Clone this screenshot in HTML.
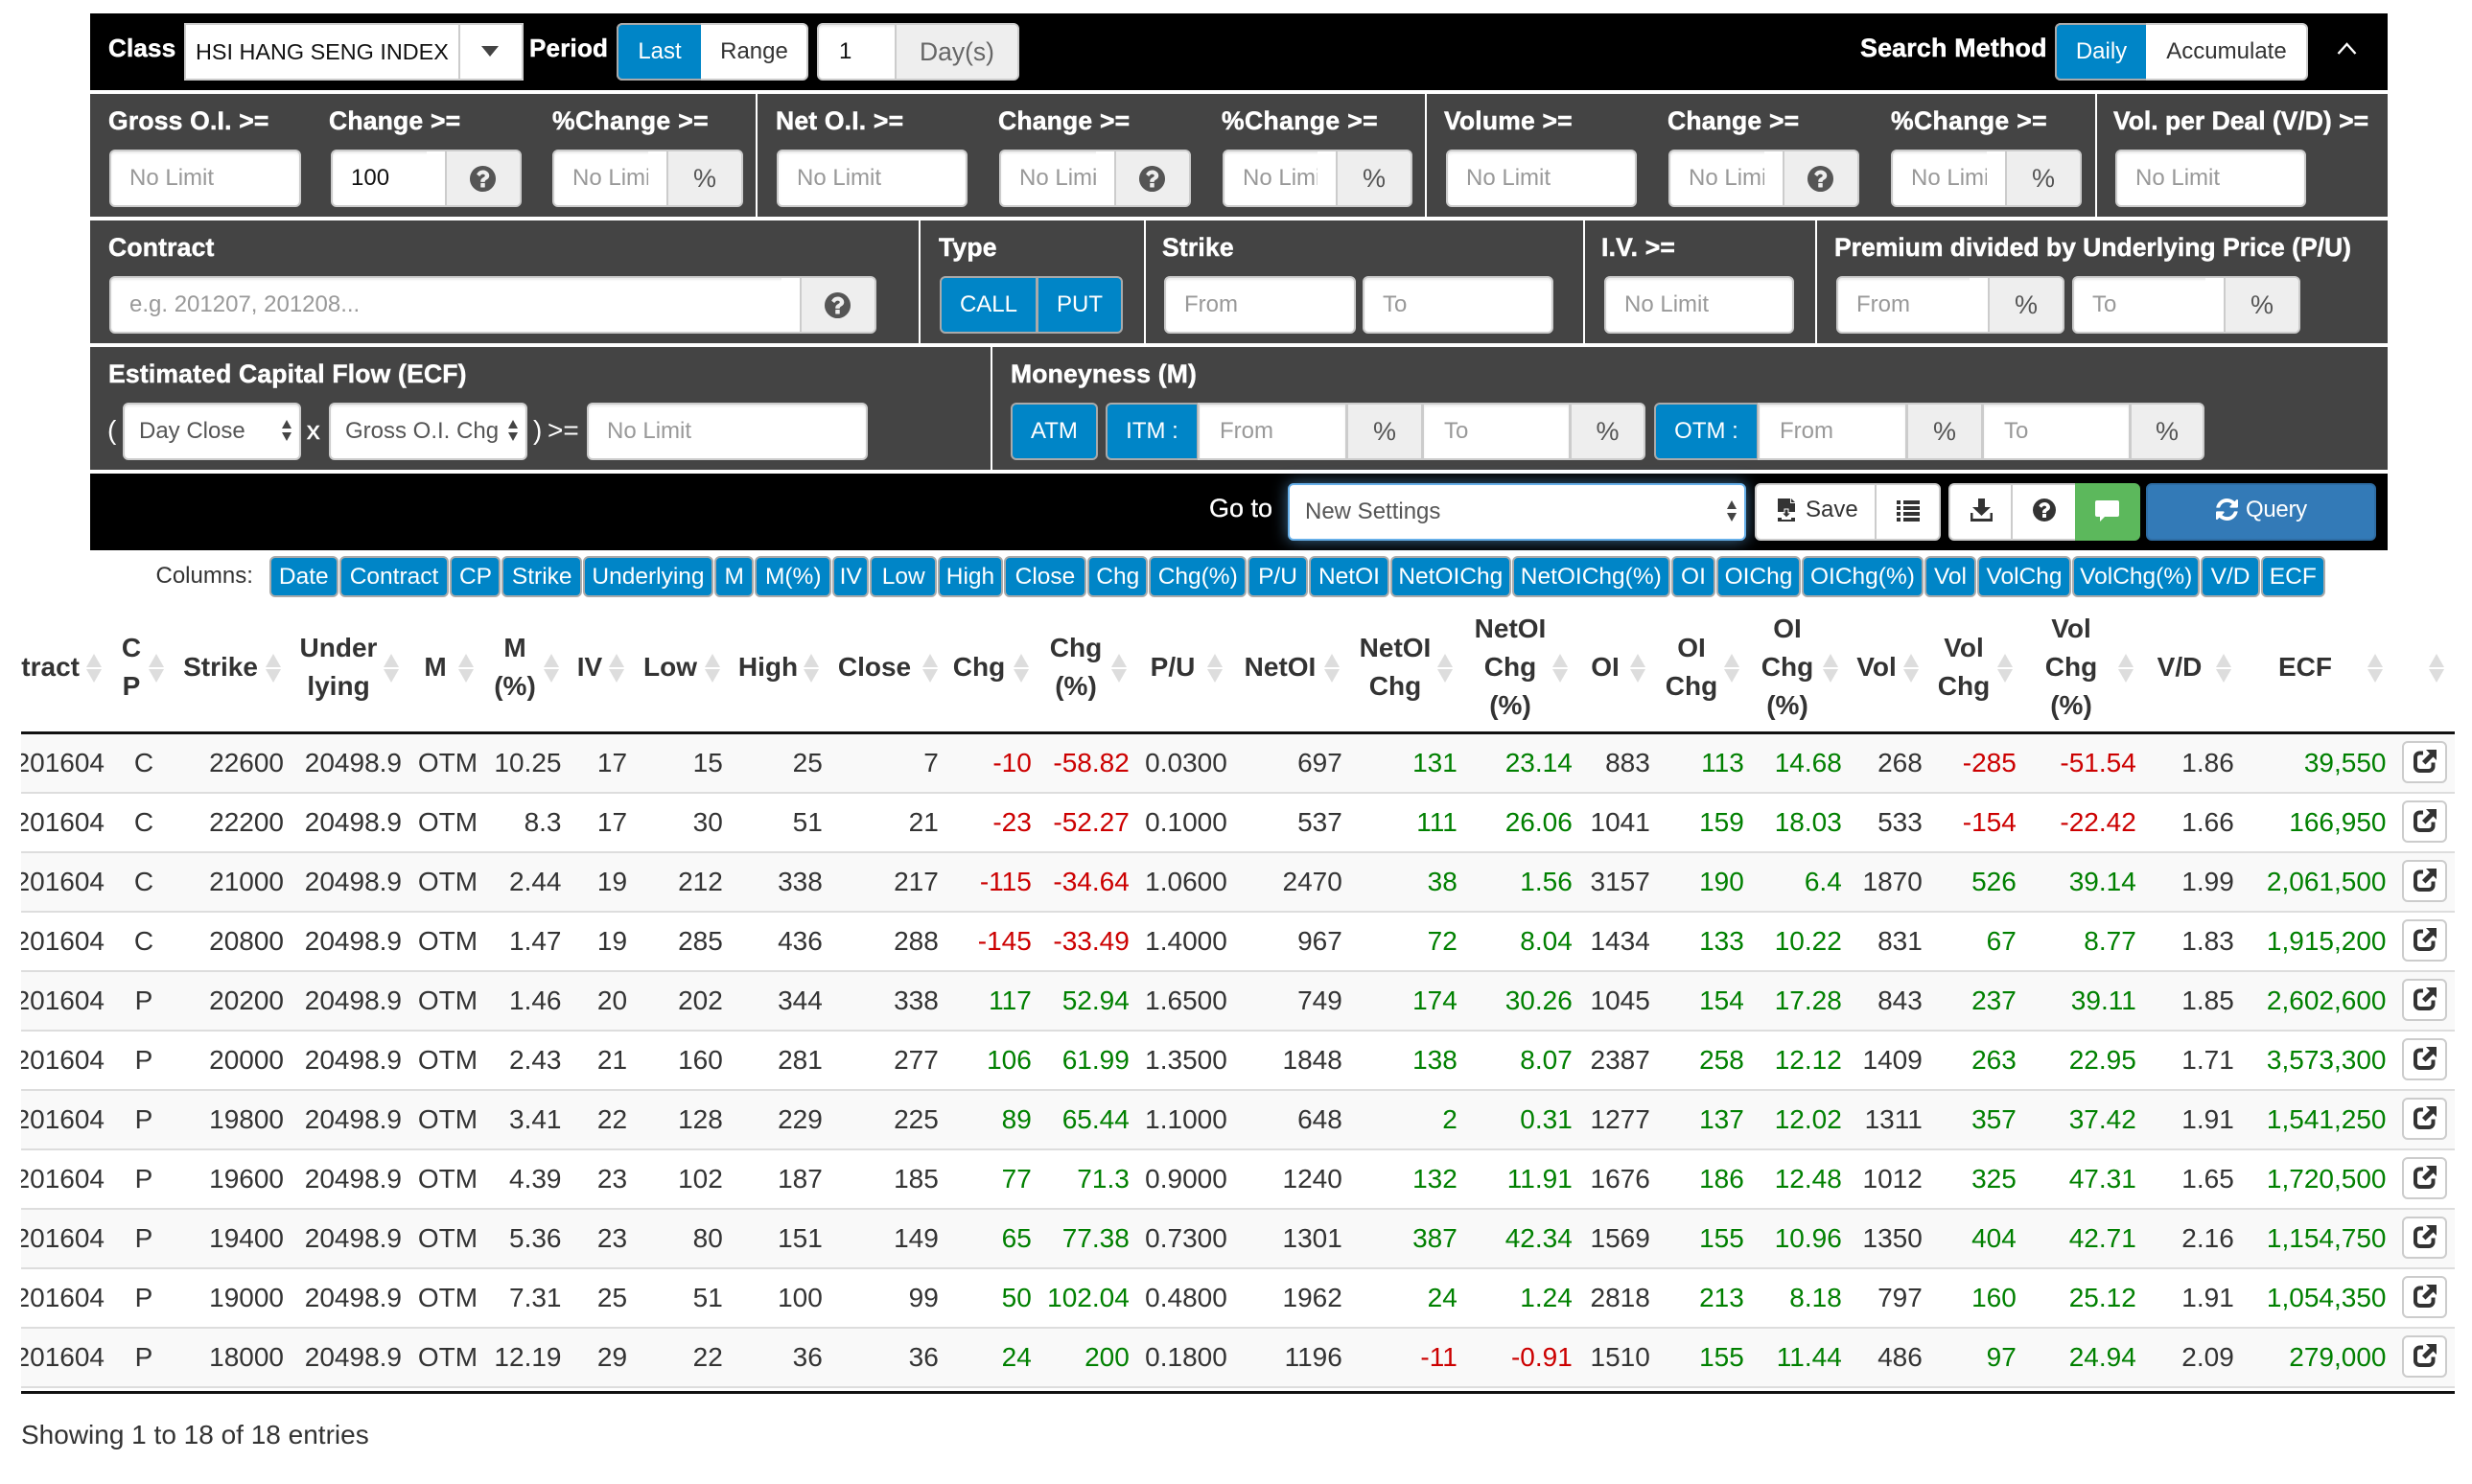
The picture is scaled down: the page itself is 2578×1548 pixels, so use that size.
<!DOCTYPE html>
<html lang="en"><head><meta charset="utf-8"><title>Options Search</title>
<style>
html,body{margin:0;padding:0;background:#fff}
body{position:relative;width:2578px;height:1548px;overflow:hidden;font-family:"Liberation Sans",Arial,sans-serif;color:#333}
.r{position:absolute;left:94px;width:2396px}
.k{background:#000}.g{background:#444}
.d{position:absolute;width:2px;background:#fff}
.l{position:absolute;font-size:26.5px;font-weight:bold;line-height:40px;color:#fff;white-space:nowrap;-webkit-text-stroke:.5px #fff;letter-spacing:.2px}
.w{position:absolute;font-size:28px;line-height:40px;color:#fff;white-space:nowrap}
.i{position:absolute;box-sizing:border-box;height:60px;background:#fff;border:2px solid #ccc;border-radius:6px;font-size:24px;line-height:56px;padding-left:19px;color:#999;overflow:hidden;white-space:nowrap;box-shadow:inset 0 2px 2px rgba(0,0,0,.075)}
.v{color:#111}
.s5{color:#555}
.a{position:absolute;right:0;top:0;bottom:0;width:76px;background:#eee;border-left:2px solid #ccc;color:#555;font-size:27px;display:flex;align-items:center;justify-content:center;box-shadow:-19px 0 0 #fff;padding:0}
.a svg{position:relative;left:-1px}
.bb{position:absolute;box-sizing:border-box;height:60px;background:#0085c7;border:2px solid #aaa;color:#fff;font-size:24px;line-height:56px;text-align:center;white-space:nowrap}
.wb{position:absolute;box-sizing:border-box;height:60px;background:#fff;border:2px solid #ccc;color:#333;font-size:24px;line-height:56px;text-align:center;white-space:nowrap}
.ar{position:absolute;width:0;height:0;border-left:5px solid transparent;border-right:5px solid transparent}
.au{border-bottom:9px solid #444}.ad{border-top:9px solid #444}
.cols{position:absolute;left:281px;top:580px;display:flex}
.cols span{box-sizing:border-box;height:43px;background:#0085c7;border:2px solid #aaa;border-radius:6px;color:#fff;font-size:24.5px;line-height:39px;padding:0;margin-right:1px;white-space:nowrap;text-align:center;flex:none;overflow:hidden}
.clip{position:absolute;left:22px;top:620px;width:2538px;height:840px;overflow:hidden}
.in{position:absolute;left:-22px;top:-620px;width:2578px;height:1548px}
.h{position:absolute;transform:translateX(-50%);text-align:center;font-size:28px;font-weight:bold;line-height:40px;color:#333;white-space:nowrap}
.s{position:absolute;top:682px;width:17px;height:30px}
.s:before,.s:after{content:"";position:absolute;left:0;width:0;height:0;border-left:8.5px solid transparent;border-right:8.5px solid transparent}
.s:before{top:0;border-bottom:14px solid #ddd}
.s:after{top:16px;border-top:14px solid #ddd}
table{position:absolute;left:0;top:766px;width:2560px;table-layout:fixed;border-collapse:separate;border-spacing:0;font-size:28px;color:#333}
td{height:62px;box-sizing:border-box;border-bottom:2px solid #ddd;padding:0;text-align:right;white-space:nowrap;line-height:60px}
tr:nth-child(odd) td{background:#f9f9f9}
td.c{text-align:center}
td.p{color:#008000}td.n{color:#c00}
td b{display:block;box-sizing:border-box;position:relative;left:16.1px;top:-1px;width:47px;height:44px;background:#fff;border:2px solid #ccc;border-radius:6px;font-weight:normal}
td b svg{position:absolute;left:10px;top:7px}
.line{position:absolute;left:22px;width:2538px;height:3px;background:#111}
svg{display:block}
.ab{position:absolute}
</style></head><body>
<svg width="0" height="0" style="position:absolute"><symbol id="q" viewBox="128 128 1536 1536"><path d="M1024 1376v-192q0-14-9-23t-23-9h-192q-14 0-23 9t-9 23v192q0 14 9 23t23 9h192q14 0 23-9t9-23zm256-672q0-88-55.5-163t-138.5-116-170-41q-243 0-371 213-15 24 8 42l132 100q7 6 19 6 16 0 25-12 53-68 86-92 34-24 86-24 48 0 85.5 26t37.5 59q0 38-20 61t-68 45q-63 28-115.5 86.5t-52.5 125.5v36q0 14 9 23t23 9h192q14 0 23-9t9-23q0-19 21.5-49.5t54.5-49.5q32-18 49-28.5t46-35 44.5-48 28-60.5 12.5-81zm384 192q0 209-103 385.5t-279.5 279.5-385.5 103-385.5-103-279.5-279.5-103-385.5 103-385.5 279.5-279.5 385.5-103 385.5 103 279.5 279.5 103 385.5z" fill="currentColor"/></symbol>
<symbol id="x" viewBox="0 0 24 24"><path d="M10 3.5H6.500a4.500 4.500 0 0 0-4.500 4.500v9.500a4.500 4.500 0 0 0 4.500 4.500h9.500a4.500 4.500 0 0 0 4.500-4.500v-4" fill="none" stroke="#333" stroke-width="4"/><path d="M13 0h11v11l-3.500-3.500-8 8-3.500-3.500 8-8z" fill="#333"/></symbol></svg>

<!-- bars -->
<div class="r k" style="top:14px;height:80px"></div>
<div class="r g" style="top:98px;height:128px"></div>
<div class="r g" style="top:230px;height:128px"></div>
<div class="r g" style="top:362px;height:128px"></div>
<div class="r k" style="top:494px;height:80px"></div>
<div class="d" style="left:788px;top:98px;height:128px"></div>
<div class="d" style="left:1486px;top:98px;height:128px"></div>
<div class="d" style="left:2185px;top:98px;height:128px"></div>
<div class="d" style="left:958px;top:230px;height:128px"></div>
<div class="d" style="left:1193px;top:230px;height:128px"></div>
<div class="d" style="left:1651px;top:230px;height:128px"></div>
<div class="d" style="left:1893px;top:230px;height:128px"></div>
<div class="d" style="left:1033px;top:362px;height:128px"></div>

<!-- row 1 -->
<div class="l" style="left:113px;top:30px;font-size:26px">Class</div>
<div class="i" style="left:192px;top:24px;width:354px;border-radius:0;padding-left:10px;font-size:23.4px;color:#111;box-shadow:none;letter-spacing:0">HSI HANG SENG INDEX
<div style="position:absolute;left:284px;top:0;bottom:0;width:2px;background:#ccc"></div>
<div style="position:absolute;left:308px;top:22px;width:0;height:0;border-left:9.500px solid transparent;border-right:9.500px solid transparent;border-top:11px solid #444"></div></div>
<div class="l" style="left:552px;top:30px;font-size:26px">Period</div>
<div class="wb" style="left:643px;top:24px;width:200px;border-radius:6px;padding-left:87px">Range</div>
<div class="bb" style="left:643px;top:24px;width:88px;border-radius:6px 0 0 6px;border-right:0">Last</div>
<div class="i v" style="left:852px;top:24px;width:211px;padding-left:21px">1<div class="a" style="width:126px;font-size:26.5px;box-shadow:none;color:#666">Day(s)</div></div>
<div class="l" style="left:1940px;top:30px;letter-spacing:.2px;font-size:26.8px">Search Method</div>
<div class="wb" style="left:2143px;top:24px;width:264px;border-radius:6px;padding-left:94px">Accumulate</div>
<div class="bb" style="left:2143px;top:24px;width:95px;border-radius:6px 0 0 6px;border-right:0">Daily</div>
<svg class="ab" style="left:2437px;top:43px" width="21" height="15" viewBox="0 0 21 15"><path d="M1.500 13L10.500 3l9 10" fill="none" stroke="#fff" stroke-width="2.400"/></svg>

<!-- row 2 -->
<div class="l" style="left:113px;top:106px">Gross O.I. &gt;=</div>
<div class="l" style="left:343px;top:106px">Change &gt;=</div>
<div class="l" style="left:576px;top:106px;letter-spacing:.4px">%Change &gt;=</div>
<div class="l" style="left:809px;top:106px">Net O.I. &gt;=</div>
<div class="l" style="left:1041px;top:106px">Change &gt;=</div>
<div class="l" style="left:1274px;top:106px;letter-spacing:.4px">%Change &gt;=</div>
<div class="l" style="left:1506px;top:106px">Volume &gt;=</div>
<div class="l" style="left:1739px;top:106px">Change &gt;=</div>
<div class="l" style="left:1972px;top:106px;letter-spacing:.4px">%Change &gt;=</div>
<div class="l" style="left:2204px;top:106px;letter-spacing:0">Vol. per Deal (V/D) &gt;=</div>
<div class="i" style="left:114px;top:156px;width:200px">No Limit</div>
<div class="i v" style="left:345px;top:156px;width:199px">100<div class="a"><svg width="27" height="27"><use href="#q"/></svg></div></div>
<div class="i" style="left:576px;top:156px;width:199px">No Limit<div class="a">%</div></div>
<div class="i" style="left:810px;top:156px;width:199px">No Limit</div>
<div class="i" style="left:1042px;top:156px;width:200px">No Limit<div class="a"><svg width="27" height="27"><use href="#q"/></svg></div></div>
<div class="i" style="left:1275px;top:156px;width:198px">No Limit<div class="a">%</div></div>
<div class="i" style="left:1508px;top:156px;width:199px">No Limit</div>
<div class="i" style="left:1740px;top:156px;width:199px">No Limit<div class="a"><svg width="27" height="27"><use href="#q"/></svg></div></div>
<div class="i" style="left:1972px;top:156px;width:199px">No Limit<div class="a">%</div></div>
<div class="i" style="left:2206px;top:156px;width:199px">No Limit</div>

<!-- row 3 -->
<div class="l" style="left:113px;top:238px">Contract</div>
<div class="l" style="left:979px;top:238px">Type</div>
<div class="l" style="left:1212px;top:238px">Strike</div>
<div class="l" style="left:1670px;top:238px">I.V. &gt;=</div>
<div class="l" style="left:1913px;top:238px;letter-spacing:0">Premium divided by Underlying Price (P/U)</div>
<div class="i" style="left:114px;top:288px;width:800px">e.g. 201207, 201208...<div class="a"><svg width="27" height="27"><use href="#q"/></svg></div></div>
<div class="bb" style="left:980px;top:288px;width:102px;border-radius:6px 0 0 6px">CALL</div>
<div class="bb" style="left:1081px;top:288px;width:90px;border-radius:0 6px 6px 0">PUT</div>
<div class="i" style="left:1214px;top:288px;width:200px">From</div>
<div class="i" style="left:1421px;top:288px;width:199px">To</div>
<div class="i" style="left:1673px;top:288px;width:198px">No Limit</div>
<div class="i" style="left:1915px;top:288px;width:238px">From<div class="a">%</div></div>
<div class="i" style="left:2161px;top:288px;width:238px">To<div class="a">%</div></div>

<!-- row 4 -->
<div class="l" style="left:113px;top:370px">Estimated Capital Flow (ECF)</div>
<div class="l" style="left:1054px;top:370px">Moneyness (M)</div>
<div class="w" style="left:112px;top:429px">(</div>
<div class="i s5" style="left:128px;top:420px;width:186px;padding-left:15px">Day Close<div class="ar au" style="left:164px;top:16px;border-bottom-color:#444"></div><div class="ar ad" style="left:164px;top:29px"></div></div>
<div class="w" style="left:320px;top:429px;font-size:27px;-webkit-text-stroke:.6px #fff">x</div>
<div class="i s5" style="left:343px;top:420px;width:207px;padding-left:15px">Gross O.I. Chg<div class="ar au" style="left:185px;top:16px"></div><div class="ar ad" style="left:185px;top:29px"></div></div>
<div class="w" style="left:556px;top:429px">)</div>
<div class="w" style="left:571px;top:429px">&gt;=</div>
<div class="i" style="left:612px;top:420px;width:293px">No Limit</div>
<div class="bb" style="left:1054px;top:420px;width:91px;border-radius:6px">ATM</div>
<div class="bb" style="left:1153px;top:420px;width:97px;border-radius:6px 0 0 6px">ITM :</div>
<div class="i" style="left:1249px;top:420px;width:156px;border-radius:0;padding-left:21px">From</div>
<div class="i" style="left:1404px;top:420px;width:80px;border-radius:0;background:#eee;color:#555;font-size:27px;padding:0;text-align:center;box-shadow:none">%</div>
<div class="i" style="left:1483px;top:420px;width:155px;border-radius:0;padding-left:21px">To</div>
<div class="i" style="left:1637px;top:420px;width:79px;border-radius:0 6px 6px 0;background:#eee;color:#555;font-size:27px;padding:0;text-align:center;box-shadow:none">%</div>
<div class="bb" style="left:1725px;top:420px;width:109px;border-radius:6px 0 0 6px">OTM :</div>
<div class="i" style="left:1833px;top:420px;width:156px;border-radius:0;padding-left:21px">From</div>
<div class="i" style="left:1988px;top:420px;width:80px;border-radius:0;background:#eee;color:#555;font-size:27px;padding:0;text-align:center;box-shadow:none">%</div>
<div class="i" style="left:2067px;top:420px;width:155px;border-radius:0;padding-left:21px">To</div>
<div class="i" style="left:2221px;top:420px;width:78px;border-radius:0 6px 6px 0;background:#eee;color:#555;font-size:27px;padding:0;text-align:center;box-shadow:none">%</div>

<!-- row 5 -->
<div class="w" style="left:1261px;top:510px;font-size:27px;-webkit-text-stroke:.3px #fff">Go to</div>
<div class="i s5" style="left:1343px;top:504px;width:478px;border-color:#66afe9;box-shadow:0 0 16px rgba(102,175,233,.6);padding-left:16px">New Settings<div class="ar au" style="left:456px;top:16px"></div><div class="ar ad" style="left:456px;top:29px"></div></div>
<div class="wb" style="left:1830px;top:504px;width:194px;border-radius:6px"></div>
<div style="position:absolute;left:1955px;top:504px;width:2px;height:60px;background:#ccc"></div>
<svg class="ab" style="left:1854px;top:520px" width="18" height="24" viewBox="0 0 18 24"><path d="M0 0h13v5h5v9H0z" fill="#333"/><path d="M14 0l4 4h-4z" fill="#333"/><path d="M0 20h4v4H0zM14 20h4v4h-4zM4 22h10v2H4z" fill="#333"/><path d="M7 11h4v4h3l-5 5-5-5h3z" fill="#333" stroke="#fff" stroke-width="1"/></svg>
<div class="ab" style="left:1883px;top:514px;font-size:24px;line-height:36px;color:#333">Save</div>
<svg class="ab" style="left:1978px;top:522px" width="24" height="22" viewBox="0 0 24 22"><path d="M0 0h4v4H0zM7 0h17v4H7zM0 6h4v4H0zM7 6h17v4H7zM0 12h4v4H0zM7 12h17v4H7zM0 18h4v4H0zM7 18h17v4H7z" fill="#333"/></svg>
<div class="wb" style="left:2032px;top:504px;width:140px;border-radius:6px 0 0 6px;border-right:0"></div>
<div style="position:absolute;left:2097px;top:504px;width:2px;height:60px;background:#ccc"></div>
<svg class="ab" style="left:2055px;top:520px" width="23" height="24" viewBox="0 0 23 24"><path d="M8 0h7v9h6L11.500 18 2 9h6z" fill="#333"/><path d="M0 15h2.500v6h18v-6H23v9H0z" fill="#333"/></svg>
<svg class="ab" style="left:2120px;top:520px;color:#333" width="24" height="24"><use href="#q"/></svg>
<div class="ab" style="left:2164px;top:504px;width:68px;height:60px;background:#5cb85c;border-radius:0 6px 6px 0"></div>
<svg class="ab" style="left:2185px;top:522px" width="25" height="22" viewBox="0 0 25 22"><path d="M2 0h21a2 2 0 0 1 2 2v13a2 2 0 0 1-2 2H10l-5 5v-5H2a2 2 0 0 1-2-2V2a2 2 0 0 1 2-2z" fill="#fff"/></svg>
<div class="ab" style="left:2238px;top:504px;width:240px;height:60px;box-sizing:border-box;background:#337ab7;border:2px solid #2e6da4;border-radius:6px"></div>
<svg class="ab" style="left:2311px;top:520px" width="23" height="23" viewBox="128 128 1536 1536"><path d="M1639 1056q0 5-1 7-64 268-268 434.500t-478 166.500q-146 0-282.500-55t-243.500-157l-129 129q-19 19-45 19t-45-19-19-45v-448q0-26 19-45t45-19h448q26 0 45 19t19 45-19 45l-137 137q71 66 161 102t187 36q134 0 250-65t186-179q11-17 53-117 8-23 30-23h192q13 0 22.500 9.500t9.500 22.500zm25-800v448q0 26-19 45t-45 19h-448q-26 0-45-19t-19-45 19-45l138-138q-148-137-349-137-134 0-250 65t-186 179q-11 17-53 117-8 23-30 23h-199q-13 0-22.500-9.500t-9.500-22.500v-7q65-268 270-434.500t480-166.500q146 0 284 55.500t245 156.500l130-129q19-19 45-19t45 19 19 45z" fill="#fff"/></svg>
<div class="ab" style="left:2342px;top:514px;font-size:24px;line-height:36px;color:#fff;letter-spacing:-.3px">Query</div>

<!-- columns -->
<div class="ab" style="left:162.5px;top:585px;font-size:24px;line-height:32px;color:#333">Columns:</div>
<div class="cols"><span style="width:71.6px">Date</span><span style="width:114.9px">Contract</span><span style="width:53px">CP</span><span style="width:83.5px">Strike</span><span style="width:136px">Underlying</span><span style="width:41.5px">M</span><span style="width:79.5px">M(%)</span><span style="width:38.5px">IV</span><span style="width:69.5px">Low</span><span style="width:68px">High</span><span style="width:86px">Close</span><span style="width:63.5px">Chg</span><span style="width:101.5px">Chg(%)</span><span style="width:63px">P/U</span><span style="width:84px">NetOI</span><span style="width:125.6px">NetOIChg</span><span style="width:165.4px">NetOIChg(%)</span><span style="width:46px">OI</span><span style="width:88px">OIChg</span><span style="width:127px">OIChg(%)</span><span style="width:54px">Vol</span><span style="width:98px">VolChg</span><span style="width:133.5px">VolChg(%)</span><span style="width:61.2px">V/D</span><span style="width:67.3px">ECF</span></div>

<!-- table -->
<div class="clip"><div class="in">
<div class="h" style="left:83px;top:676px;transform:translateX(-100%)">Contract</div>
<div class="h" style="left:137px;top:656px">C<br>P</div>
<div class="h" style="left:230px;top:676px">Strike</div>
<div class="h" style="left:353px;top:656px">Under<br>lying</div>
<div class="h" style="left:454px;top:676px">M</div>
<div class="h" style="left:537px;top:656px">M<br>(%)</div>
<div class="h" style="left:615px;top:676px">IV</div>
<div class="h" style="left:699px;top:676px">Low</div>
<div class="h" style="left:801px;top:676px">High</div>
<div class="h" style="left:912px;top:676px">Close</div>
<div class="h" style="left:1021px;top:676px">Chg</div>
<div class="h" style="left:1122px;top:656px">Chg<br>(%)</div>
<div class="h" style="left:1223px;top:676px">P/U</div>
<div class="h" style="left:1335px;top:676px">NetOI</div>
<div class="h" style="left:1455px;top:656px">NetOI<br>Chg</div>
<div class="h" style="left:1575px;top:636px">NetOI<br>Chg<br>(%)</div>
<div class="h" style="left:1674px;top:676px">OI</div>
<div class="h" style="left:1764px;top:656px">OI<br>Chg</div>
<div class="h" style="left:1864px;top:636px">OI<br>Chg<br>(%)</div>
<div class="h" style="left:1957px;top:676px">Vol</div>
<div class="h" style="left:2048px;top:656px">Vol<br>Chg</div>
<div class="h" style="left:2160px;top:636px">Vol<br>Chg<br>(%)</div>
<div class="h" style="left:2273px;top:676px">V/D</div>
<div class="h" style="left:2404px;top:676px">ECF</div>
<i class="s" style="left:90px"></i><i class="s" style="left:155px"></i><i class="s" style="left:277px"></i><i class="s" style="left:400px"></i><i class="s" style="left:478px"></i><i class="s" style="left:567px"></i><i class="s" style="left:635px"></i><i class="s" style="left:735px"></i><i class="s" style="left:838px"></i><i class="s" style="left:962px"></i><i class="s" style="left:1057px"></i><i class="s" style="left:1159px"></i><i class="s" style="left:1259px"></i><i class="s" style="left:1381px"></i><i class="s" style="left:1499px"></i><i class="s" style="left:1619px"></i><i class="s" style="left:1700px"></i><i class="s" style="left:1798px"></i><i class="s" style="left:1901px"></i><i class="s" style="left:1985px"></i><i class="s" style="left:2083px"></i><i class="s" style="left:2209px"></i><i class="s" style="left:2311px"></i><i class="s" style="left:2468.500px"></i><i class="s" style="left:2532.500px"></i>
<table>
<colgroup><col style="width:109px"><col style="width:82px"><col style="width:105px"><col style="width:123px"><col style="width:96px"><col style="width:70.500px"><col style="width:106px"><col style="width:62.300px"><col style="width:104px"><col style="width:121px"><col style="width:97px"><col style="width:102px"><col style="width:102px"><col style="width:120px"><col style="width:120px"><col style="width:120px"><col style="width:81px"><col style="width:98px"><col style="width:102px"><col style="width:84px"><col style="width:98px"><col style="width:125px"><col style="width:102px"><col style="width:158.700px"><col style="width:71.500px"></colgroup>
<tr><td>201604</td><td class="c">C</td><td>22600</td><td>20498.9</td><td class="c">OTM</td><td>10.25</td><td class="c">17</td><td>15</td><td>25</td><td>7</td><td class="n">-10</td><td class="n">-58.82</td><td>0.0300</td><td>697</td><td class="p">131</td><td class="p">23.14</td><td>883</td><td class="p">113</td><td class="p">14.68</td><td>268</td><td class="n">-285</td><td class="n">-51.54</td><td>1.86</td><td class="p">39,550</td><td><b><svg width="24" height="24"><use href="#x"/></svg></b></td></tr>
<tr><td>201604</td><td class="c">C</td><td>22200</td><td>20498.9</td><td class="c">OTM</td><td>8.3</td><td class="c">17</td><td>30</td><td>51</td><td>21</td><td class="n">-23</td><td class="n">-52.27</td><td>0.1000</td><td>537</td><td class="p">111</td><td class="p">26.06</td><td>1041</td><td class="p">159</td><td class="p">18.03</td><td>533</td><td class="n">-154</td><td class="n">-22.42</td><td>1.66</td><td class="p">166,950</td><td><b><svg width="24" height="24"><use href="#x"/></svg></b></td></tr>
<tr><td>201604</td><td class="c">C</td><td>21000</td><td>20498.9</td><td class="c">OTM</td><td>2.44</td><td class="c">19</td><td>212</td><td>338</td><td>217</td><td class="n">-115</td><td class="n">-34.64</td><td>1.0600</td><td>2470</td><td class="p">38</td><td class="p">1.56</td><td>3157</td><td class="p">190</td><td class="p">6.4</td><td>1870</td><td class="p">526</td><td class="p">39.14</td><td>1.99</td><td class="p">2,061,500</td><td><b><svg width="24" height="24"><use href="#x"/></svg></b></td></tr>
<tr><td>201604</td><td class="c">C</td><td>20800</td><td>20498.9</td><td class="c">OTM</td><td>1.47</td><td class="c">19</td><td>285</td><td>436</td><td>288</td><td class="n">-145</td><td class="n">-33.49</td><td>1.4000</td><td>967</td><td class="p">72</td><td class="p">8.04</td><td>1434</td><td class="p">133</td><td class="p">10.22</td><td>831</td><td class="p">67</td><td class="p">8.77</td><td>1.83</td><td class="p">1,915,200</td><td><b><svg width="24" height="24"><use href="#x"/></svg></b></td></tr>
<tr><td>201604</td><td class="c">P</td><td>20200</td><td>20498.9</td><td class="c">OTM</td><td>1.46</td><td class="c">20</td><td>202</td><td>344</td><td>338</td><td class="p">117</td><td class="p">52.94</td><td>1.6500</td><td>749</td><td class="p">174</td><td class="p">30.26</td><td>1045</td><td class="p">154</td><td class="p">17.28</td><td>843</td><td class="p">237</td><td class="p">39.11</td><td>1.85</td><td class="p">2,602,600</td><td><b><svg width="24" height="24"><use href="#x"/></svg></b></td></tr>
<tr><td>201604</td><td class="c">P</td><td>20000</td><td>20498.9</td><td class="c">OTM</td><td>2.43</td><td class="c">21</td><td>160</td><td>281</td><td>277</td><td class="p">106</td><td class="p">61.99</td><td>1.3500</td><td>1848</td><td class="p">138</td><td class="p">8.07</td><td>2387</td><td class="p">258</td><td class="p">12.12</td><td>1409</td><td class="p">263</td><td class="p">22.95</td><td>1.71</td><td class="p">3,573,300</td><td><b><svg width="24" height="24"><use href="#x"/></svg></b></td></tr>
<tr><td>201604</td><td class="c">P</td><td>19800</td><td>20498.9</td><td class="c">OTM</td><td>3.41</td><td class="c">22</td><td>128</td><td>229</td><td>225</td><td class="p">89</td><td class="p">65.44</td><td>1.1000</td><td>648</td><td class="p">2</td><td class="p">0.31</td><td>1277</td><td class="p">137</td><td class="p">12.02</td><td>1311</td><td class="p">357</td><td class="p">37.42</td><td>1.91</td><td class="p">1,541,250</td><td><b><svg width="24" height="24"><use href="#x"/></svg></b></td></tr>
<tr><td>201604</td><td class="c">P</td><td>19600</td><td>20498.9</td><td class="c">OTM</td><td>4.39</td><td class="c">23</td><td>102</td><td>187</td><td>185</td><td class="p">77</td><td class="p">71.3</td><td>0.9000</td><td>1240</td><td class="p">132</td><td class="p">11.91</td><td>1676</td><td class="p">186</td><td class="p">12.48</td><td>1012</td><td class="p">325</td><td class="p">47.31</td><td>1.65</td><td class="p">1,720,500</td><td><b><svg width="24" height="24"><use href="#x"/></svg></b></td></tr>
<tr><td>201604</td><td class="c">P</td><td>19400</td><td>20498.9</td><td class="c">OTM</td><td>5.36</td><td class="c">23</td><td>80</td><td>151</td><td>149</td><td class="p">65</td><td class="p">77.38</td><td>0.7300</td><td>1301</td><td class="p">387</td><td class="p">42.34</td><td>1569</td><td class="p">155</td><td class="p">10.96</td><td>1350</td><td class="p">404</td><td class="p">42.71</td><td>2.16</td><td class="p">1,154,750</td><td><b><svg width="24" height="24"><use href="#x"/></svg></b></td></tr>
<tr><td>201604</td><td class="c">P</td><td>19000</td><td>20498.9</td><td class="c">OTM</td><td>7.31</td><td class="c">25</td><td>51</td><td>100</td><td>99</td><td class="p">50</td><td class="p">102.04</td><td>0.4800</td><td>1962</td><td class="p">24</td><td class="p">1.24</td><td>2818</td><td class="p">213</td><td class="p">8.18</td><td>797</td><td class="p">160</td><td class="p">25.12</td><td>1.91</td><td class="p">1,054,350</td><td><b><svg width="24" height="24"><use href="#x"/></svg></b></td></tr>
<tr><td>201604</td><td class="c">P</td><td>18000</td><td>20498.9</td><td class="c">OTM</td><td>12.19</td><td class="c">29</td><td>22</td><td>36</td><td>36</td><td class="p">24</td><td class="p">200</td><td>0.1800</td><td>1196</td><td class="n">-11</td><td class="n">-0.91</td><td>1510</td><td class="p">155</td><td class="p">11.44</td><td>486</td><td class="p">97</td><td class="p">24.94</td><td>2.09</td><td class="p">279,000</td><td><b><svg width="24" height="24"><use href="#x"/></svg></b></td></tr>
</table>
</div></div>
<div class="line" style="top:763px"></div>
<div class="line" style="top:1451px"></div>
<div class="ab" style="left:22px;top:1477px;font-size:28px;line-height:40px;color:#333">Showing 1 to 18 of 18 entries</div>
</body></html>
